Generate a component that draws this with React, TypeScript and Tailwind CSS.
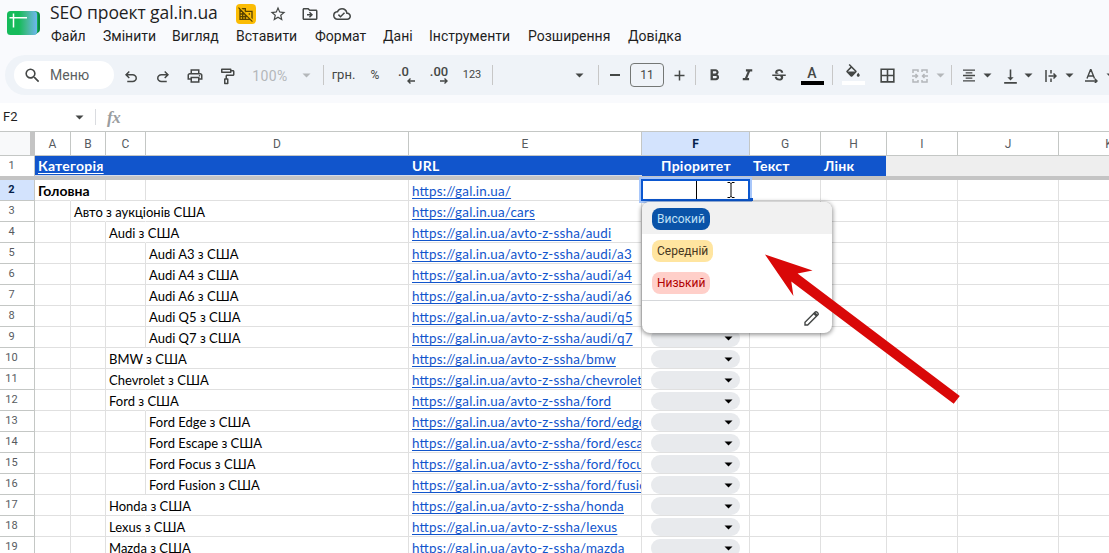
import type { ReactNode } from "react";
import {
  MdDomainDisabled,
  MdFormatAlignCenter,
  MdFormatBold,
  MdFormatItalic,
  MdOutlineBorderAll,
  MdOutlineCloudDone,
  MdOutlineDriveFileMove,
  MdOutlineImagesearchRoller,
  MdOutlinePrint,
  MdOutlineStarBorder,
  MdSearch,
  MdStrikethroughS,
  MdVerticalAlignBottom,
} from "react-icons/md";

interface SheetRow {
  n: number;
  level: number;
  label: string;
  url: string;
}

const BASE = "https://gal.in.ua/";

const rows: SheetRow[] = [
  { n: 2, level: 0, label: "Головна", url: "" },
  { n: 3, level: 1, label: "Авто з аукціонів США", url: "cars" },
  { n: 4, level: 2, label: "Audi з США", url: "avto-z-ssha/audi" },
  { n: 5, level: 3, label: "Audi A3 з США", url: "avto-z-ssha/audi/a3" },
  { n: 6, level: 3, label: "Audi A4 з США", url: "avto-z-ssha/audi/a4" },
  { n: 7, level: 3, label: "Audi A6 з США", url: "avto-z-ssha/audi/a6" },
  { n: 8, level: 3, label: "Audi Q5 з США", url: "avto-z-ssha/audi/q5" },
  { n: 9, level: 3, label: "Audi Q7 з США", url: "avto-z-ssha/audi/q7" },
  { n: 10, level: 2, label: "BMW з США", url: "avto-z-ssha/bmw" },
  { n: 11, level: 2, label: "Chevrolet з США", url: "avto-z-ssha/chevrolet" },
  { n: 12, level: 2, label: "Ford з США", url: "avto-z-ssha/ford" },
  { n: 13, level: 3, label: "Ford Edge з США", url: "avto-z-ssha/ford/edge" },
  { n: 14, level: 3, label: "Ford Escape з США", url: "avto-z-ssha/ford/escape" },
  { n: 15, level: 3, label: "Ford Focus з США", url: "avto-z-ssha/ford/focus" },
  { n: 16, level: 3, label: "Ford Fusion з США", url: "avto-z-ssha/ford/fusion" },
  { n: 17, level: 2, label: "Honda з США", url: "avto-z-ssha/honda" },
  { n: 18, level: 2, label: "Lexus з США", url: "avto-z-ssha/lexus" },
  { n: 19, level: 2, label: "Mazda з США", url: "avto-z-ssha/mazda" },
];

const columns = [
  { name: "A", width: "w-9" },
  { name: "B", width: "w-[35px]" },
  { name: "C", width: "w-10" },
  { name: "D", width: "w-[263px]" },
  { name: "E", width: "w-[233px]" },
  { name: "F", width: "w-[108px]" },
  { name: "G", width: "w-[71px]" },
  { name: "H", width: "w-[66px]" },
  { name: "I", width: "w-[71px]" },
  { name: "J", width: "w-[101px]" },
  { name: "K", width: "w-[101px]" },
];

const menu = [
  { label: "Файл", width: "w-[52px]" },
  { label: "Змінити", width: "w-[69px]" },
  { label: "Вигляд", width: "w-[64px]" },
  { label: "Вставити", width: "w-[79px]" },
  { label: "Формат", width: "w-[68px]" },
  { label: "Дані", width: "w-[46px]" },
  { label: "Інструменти", width: "w-[99px]" },
  { label: "Розширення", width: "w-[100px]" },
  { label: "Довідка", width: "w-[60px]" },
];

const options = [
  { label: "Високий", row: "bg-[#f1f1f1]", chip: "bg-[#0a53a8] text-[#bfe0f6]" },
  { label: "Середній", row: "", chip: "bg-[#ffe5a0] text-[#473821]" },
  { label: "Низький", row: "", chip: "bg-[#ffcfc9] text-[#b10202]" },
];

function Slot({ className, children }: { className: string; children: ReactNode }) {
  return <div className={`flex h-full shrink-0 items-center justify-center whitespace-nowrap ${className}`}>{children}</div>;
}

function Divider() {
  return <span className="h-5 w-px bg-[#c7c7c7]" />;
}

function Caret({ className = "text-[#444746]" }: { className?: string }) {
  return (
    <svg className={`h-[5px] w-[9px] shrink-0 ${className}`} viewBox="0 0 9 5" fill="currentColor">
      <path d="M0.5 0.5h8L4.5 4.5z" />
    </svg>
  );
}

function Symbol({ d, className = "" }: { d: string; className?: string }) {
  return (
    <svg className={`size-[18px] shrink-0 ${className}`} viewBox="0 -960 960 960" fill="currentColor">
      <path d={d} />
    </svg>
  );
}

const UNDO =
  "M280-200v-80h284q63 0 109.5-40T720-420q0-60-46.5-100T564-560H312l104 104-56 56-200-200 200-200 56 56-104 104h252q97 0 166.5 63T800-420q0 94-69.5 157T564-200H280Z";

function Logo() {
  return (
    <svg className="h-[26px] w-[34px]" viewBox="0 0 34 26">
      <defs>
        <linearGradient id="sheet" x1="0" x2="1" y1="0" y2="0">
          <stop offset="0.4" stopColor="#16bb5b" />
          <stop offset="0.65" stopColor="#43b991" />
          <stop offset="1" stopColor="#6fb6ef" />
        </linearGradient>
      </defs>
      <rect x="14" y="1.5" width="19" height="21.5" rx="4" fill="#0b8a43" />
      <rect x="11" y="1" width="20" height="23.5" rx="4" fill="#12ad52" />
      <rect x="0" y="1" width="30" height="24" rx="3.5" fill="url(#sheet)" />
      <path d="M6.500 3.500v14M2.500 7.800h17.500" stroke="#fff" strokeWidth="1.5" fill="none" />
    </svg>
  );
}

function Header() {
  return (
    <header className="flex h-[55px] pl-[7px]">
      <div className="w-[43px] pt-[10px]">
        <Logo />
      </div>
      <div className="flex flex-col">
        <div className="flex h-[27px] items-center text-[#444746]">
          <span className="w-[186px] whitespace-nowrap pb-0.5 font-['Open_Sans',sans-serif] text-[17.5px] tracking-[-0.1px] text-[#1f1f1f]">
            SEO проект gal.in.ua
          </span>
          <span className="flex size-5 items-center justify-center rounded bg-[#fbbc04] text-[#594300]">
            <MdDomainDisabled className="size-4" />
          </span>
          <MdOutlineStarBorder className="ml-[13px] size-[18px]" />
          <MdOutlineDriveFileMove className="ml-[14px] size-[18px]" />
          <MdOutlineCloudDone className="ml-[14px] size-[18px]" />
        </div>
        <nav className="flex h-[18px] items-center whitespace-nowrap pl-px font-[Roboto,sans-serif] text-sm text-[#1f1f1f]">
          {menu.map((m) => (
            <span key={m.label} className={`shrink-0 ${m.width}`}>
              {m.label}
            </span>
          ))}
        </nav>
      </div>
    </header>
  );
}

function DecimalIcon({ label, right = false }: { label: string; right?: boolean }) {
  return (
    <span className={`relative -top-[3px] text-[13px] font-medium ${right ? "" : "right-[3px]"}`}>
      {label}
      <svg
        className={`absolute -bottom-[3px] h-[6px] w-2 ${right ? "right-0" : "-right-[6px]"}`}
        viewBox="0 0 8 6"
        fill="none"
        stroke="currentColor"
        strokeWidth="1.4"
      >
        {right ? <path d="M0 3h7M4.500 0.500L7 3 4.500 5.500" /> : <path d="M8 3H1M3.500 0.500L1 3l2.500 2.500" />}
      </svg>
    </span>
  );
}

function Toolbar() {
  return (
    <div className="ml-[5px] flex h-10 overflow-hidden rounded-l-full bg-[#eff3f8] pl-[9px] font-[Roboto,sans-serif] text-xs text-[#444746]">
      <div className="mr-px mt-1.5 flex h-7 w-[100px] shrink-0 items-center rounded-full bg-white pl-[9px] text-sm text-[#5b5f62]">
        <MdSearch className="mr-2 size-[19px] text-[#444746]" />
        Меню
      </div>
      <Slot className="w-8 pt-1"><Symbol d={UNDO} /></Slot>
      <Slot className="w-8 pt-1"><Symbol d={UNDO} className="-scale-x-100" /></Slot>
      <Slot className="w-8 pt-0.5"><MdOutlinePrint className="size-[18px]" /></Slot>
      <Slot className="w-8 pt-0.5"><MdOutlineImagesearchRoller className="size-[18px] -scale-x-100" /></Slot>
      <Slot className="w-[54px] pt-0.5 text-sm tracking-[0.4px] text-[#b4b7ba]">100%</Slot>
      <Slot className="w-[18px]"><Caret className="text-[#b4b7ba]" /></Slot>
      <Slot className="w-[17px]"><Divider /></Slot>
      <Slot className="w-[23px] text-[13px]">грн.</Slot>
      <Slot className="w-10">%</Slot>
      <Slot className="w-[23px]"><DecimalIcon label=".0" /></Slot>
      <Slot className="w-[42px]"><DecimalIcon label=".00" right /></Slot>
      <Slot className="w-6 text-[11px]">123</Slot>
      <Slot className="w-[17px]"><Divider /></Slot>
      <div className="flex w-[88px] shrink-0 items-center justify-end pr-[5px]"><Caret /></div>
      <Slot className="w-[18px]"><Divider /></Slot>
      <Slot className="w-4"><span className="h-[1.5px] w-2.5 bg-[#444746]" /></Slot>
      <Slot className="w-12">
        <span className="flex h-6 w-[34px] items-center justify-center rounded border border-[#747775]">11</span>
      </Slot>
      <Slot className="w-4">
        <svg className="size-[11px]" viewBox="0 0 11 11" stroke="currentColor" strokeWidth="1.5"><path d="M5.500 0.500v10M0.500 5.500h10" /></svg>
      </Slot>
      <Slot className="w-[17px]"><Divider /></Slot>
      <Slot className="w-5 pt-px"><MdFormatBold className="size-[19px]" /></Slot>
      <Slot className="w-[46px] pt-px"><MdFormatItalic className="size-[19px]" /></Slot>
      <Slot className="w-[18px] pt-px"><MdStrikethroughS className="size-[18px]" /></Slot>
      <div className="ml-3 flex w-6 shrink-0 flex-col items-center pt-[11px]">
        <span className="text-sm font-medium leading-[14px]">A</span>
        <span className="mt-px h-1 w-[23px] bg-black" />
      </div>
      <Slot className="w-[17px]"><Divider /></Slot>
      <div className="flex w-6 shrink-0 flex-col items-center pt-[9px]">
        <svg className="size-[18px]" viewBox="0 0 24 24" fill="currentColor">
          <path d="M16.56 8.940L7.620 0 6.210 1.410l2.380 2.380-5.150 5.150a1.490 1.490 0 0 0 0 2.120l5.500 5.500c.29.29.68.44 1.060.44s.77-.15 1.060-.44l5.500-5.500c.59-.58.59-1.530 0-2.120zM5.210 10L10 5.210 14.790 10H5.210zM19 11.500s-2 2.170-2 3.500c0 1.100.9 2 2 2s2-.9 2-2c0-1.330-2-3.500-2-3.500z" />
        </svg>
        <span className="-mt-px h-1 w-[23px] bg-white" />
      </div>
      <Slot className="w-11 pt-px"><MdOutlineBorderAll className="size-[19px]" /></Slot>
      <Slot className="w-[22px] pt-px">
        <svg className="h-[14px] w-4 text-[#b4b7ba]" viewBox="0 0 16 14" fill="none" stroke="currentColor" strokeWidth="1.5">
          <path d="M1 4V1h5v2M10 3V1h5v3M1 10v3h5v-2M10 11v2h5v-3M0 7h5M3.500 5L5.500 7l-2 2M16 7h-5M12.500 5l-2 2 2 2" />
        </svg>
      </Slot>
      <Slot className="w-[19px]"><Caret className="text-[#b4b7ba]" /></Slot>
      <Slot className="w-[3px]"><Divider /></Slot>
      <Slot className="ml-2 w-4 pt-px"><MdFormatAlignCenter className="size-[19px]" /></Slot>
      <Slot className="w-5"><Caret /></Slot>
      <Slot className="w-[26px] pt-0.5"><MdVerticalAlignBottom className="size-[19px]" /></Slot>
      <Slot className="w-2.5"><Caret /></Slot>
      <Slot className="ml-[9px] w-[18px] pt-px">
        <svg className="h-3 w-3" viewBox="0 0 12 12" fill="none" stroke="currentColor" strokeWidth="1.500">
          <path d="M1 0v12M6 0v3.500M6 8.500V12M3.500 6h7.500M8.500 3.500L11 6 8.500 8.500" />
        </svg>
      </Slot>
      <Slot className="w-[18px]"><Caret /></Slot>
      <Slot className="w-[26px] pt-px">
        <svg className="h-[14px] w-[13px]" viewBox="0 0 13 14" fill="none" stroke="currentColor" strokeWidth="1.400">
          <path d="M2 9.500L5.500 0.800h0.500L9.500 9.500M3.200 7h5M0 12h12M9.800 9.800L12 12l-2.200 2.200" />
        </svg>
      </Slot>
      <Slot className="w-3"><Caret /></Slot>
    </div>
  );
}

function FormulaBar() {
  return (
    <div className="mt-2 flex h-7 items-center bg-white pl-[3px]">
      <span className="w-[72px] font-[Roboto,sans-serif] text-[13px] text-[#1f1f1f]">F2</span>
      <Caret />
      <span className="ml-[11px] h-4 w-px bg-[#dadce0]" />
      <span className="ml-[11px] pt-0.5 font-['Liberation_Serif',serif] text-[17px] font-bold italic tracking-[-0.5px] text-[#9a9da0]">fx</span>
    </div>
  );
}

function ColumnHeads() {
  return (
    <div className="flex h-[25px] shrink-0 border-y border-[#c4c7c5] bg-white font-[Roboto,sans-serif] text-xs text-[#575b5f]">
      <div className="w-[35px] shrink-0 border-r-[5px] border-[#c4c4c4] bg-[#f8f9fa]" />
      {columns.map((c) => (
        <div
          key={c.name}
          className={`flex shrink-0 items-center justify-center border-r border-[#c4c7c5] ${c.width} ${
            c.name === "F" ? "bg-[#d3e3fd] font-bold text-[#041e49]" : ""
          }`}
        >
          {c.name}
        </div>
      ))}
    </div>
  );
}

function FrozenRow() {
  return (
    <div className="flex h-6 shrink-0 border-b-4 border-[#c4c4c4] bg-[#eeeeee] text-[14px] font-bold text-white">
      <div className="flex w-[35px] shrink-0 border-r border-[#c4c7c5] bg-white font-[Roboto,sans-serif] text-[11px] font-normal text-[#575b5f]">
        <span className="w-[23px] text-center leading-[19px]">1</span>
      </div>
      <div className="flex w-[851px] shrink-0 bg-[#1155cc] font-[Lato,sans-serif] leading-[20px] tracking-[0.25px]">
        <span className="w-[374px] border-b border-[#d5dcea] pl-[3px] underline underline-offset-2">Категорія</span>
        <span className="w-[233px] border-b border-[#d5dcea] pl-[3px]">URL</span>
        <span className="w-[108px] text-center">Пріоритет</span>
        <span className="w-[71px] pl-[3px]">Текст</span>
        <span className="w-[65px] pl-[3px]">Лінк</span>
      </div>
    </div>
  );
}

// Text that overflows into the neighbour cell hides the gridline between them
function hidesLine(row: SheetRow, col: number) {
  if (row.level === 0) return col === 0;
  return col >= row.level && col < 3;
}

function Row({ row }: { row: SheetRow }) {
  const active = row.n === 2;
  return (
    <div className="flex h-[21px] shrink-0">
      <div
        className={`flex w-[35px] shrink-0 border-b border-r border-[#c4c7c5] font-[Roboto,sans-serif] text-[11px] ${
          active ? "bg-[#d3e3fd] font-bold text-[#041e49]" : "text-[#575b5f]"
        }`}
      >
        <span className="w-[23px] text-center leading-[19px]">{row.n}</span>
      </div>
      {columns.map((c, i) => (
        <div
          key={c.name}
          className={`flex shrink-0 border-b border-r border-b-[#e0e0e0] font-[Lato,sans-serif] leading-[22px] whitespace-nowrap ${c.width} ${
            hidesLine(row, i) ? "border-r-transparent" : "border-r-[#e0e0e0]"
          } ${c.name === "E" ? "overflow-hidden" : ""}`}
        >
          {i === row.level && (
            <span className={`relative z-10 pl-[3px] text-black ${active ? "text-sm leading-[22px] font-bold" : "text-[13px]"}`}>
              {row.label}
            </span>
          )}
          {c.name === "E" && (
            <span className="pl-[3px] text-[13.4px] tracking-[0.2px] text-[#1155cc] [font-feature-settings:'liga'_1]">
              <span className="underline underline-offset-2">{BASE + row.url}</span>
            </span>
          )}
          {c.name === "F" && !active && (
            <span className="ml-[9px] mt-0.5 flex h-[18px] w-[89px] items-center justify-end rounded-full bg-[#e8eaed] pr-[7px]">
              <Caret className="text-black" />
            </span>
          )}
        </div>
      ))}
    </div>
  );
}

function PriorityMenu() {
  return (
    <div className="absolute left-[642px] top-[202px] z-20 flex h-[131px] w-[190px] flex-col overflow-hidden rounded-lg bg-white font-[Roboto,sans-serif] text-xs shadow-[0_1px_4px_1px_rgba(0,0,0,0.4)]">
      {options.map((o) => (
        <div key={o.label} className={`flex h-8 shrink-0 items-center pl-[10px] pt-0.5 ${o.row}`}>
          <span className={`flex h-[22px] items-center rounded-lg px-[5px] ${o.chip}`}>{o.label}</span>
        </div>
      ))}
      <div className="mt-0.5 flex flex-1 items-center justify-end border-t border-[#d5d7da] pr-[13px] pt-0.5">
        <svg className="size-[15px] text-[#444746]" viewBox="0 0 15 15" fill="none" stroke="currentColor" strokeWidth="1.400">
          <path d="M1 14v-2.800L11.200 1q0.800-0.600 1.600 0l1.100 1.100q0.700 0.800 0 1.600L3.700 14z" />
          <path d="M10.200 2l2.800 2.800" strokeWidth="2.500" />
        </svg>
      </div>
    </div>
  );
}

function CellEditor() {
  return (
    <div className="absolute left-[641px] top-[179px] z-10 h-[22px] w-[109px] border-2 border-[#0b57d0] bg-white shadow-[0_0_0_2px_#a8c7fa]">
      <span className="absolute left-[53px] top-0 h-[18px] w-px bg-black" />
      <svg className="absolute left-[84px] top-px h-4 w-2" viewBox="0 0 8 16" fill="none" stroke="#000">
        <path d="M0.500 0.500h2.500l1 1 1-1h2.500M4 1v14M0.500 15.500h2.500l1-1 1 1h2.500" />
      </svg>
      <span className="absolute -right-[5px] -bottom-[2px] size-[3px] bg-[#0b57d0]" />
    </div>
  );
}

export default function App() {
  return (
    <div className="relative flex h-[553px] w-[1109px] flex-col overflow-hidden bg-[#f9fafd]">
      <Header />
      <Toolbar />
      <FormulaBar />
      <main className="flex flex-1 flex-col overflow-hidden bg-white">
        <ColumnHeads />
        <FrozenRow />
        {rows.map((row) => (
          <Row key={row.n} row={row} />
        ))}
      </main>
      <CellEditor />
      <PriorityMenu />
      <svg className="absolute left-[760px] top-[250px] z-30 h-[160px] w-[205px]" viewBox="760 250 205 160">
        <path d="M765 254.500L812.500 270.500 797.600 273.600 959.800 396 953.700 403.800 791.300 281.400 793.400 296z" fill="#d90808" />
      </svg>
    </div>
  );
}
